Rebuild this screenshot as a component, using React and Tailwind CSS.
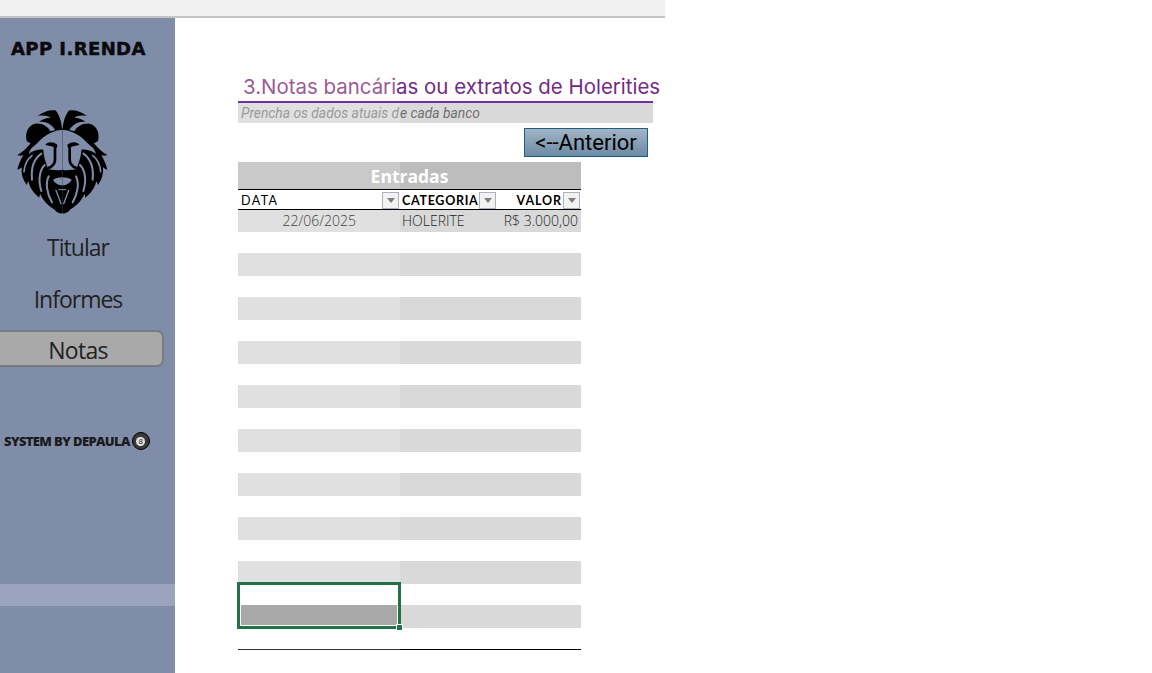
import React from 'react';

const bandRows = [0, 1, 2, 3, 4, 5, 6, 7, 8];

function LionHalf() {
    return (
        <g>
            {/* crown tuft */}
            <path fill="#000" d="M157 80C155 52 149 30 136 16C118 14 100 20 83 33C100 30 112 32 122 38C108 38 96 43 87 51C108 47 128 58 140 82Z" />
            {/* ear */}
            <path fill="#000" d="M50 108C44 84 54 60 76 56C96 54 114 64 124 84L110 100L70 120Z" />
            {/* mane */}
            <path fill="#000" d="M157 70L115 80C90 90 66 108 54 124C44 136 34 144 22 150C28 153 34 153 40 151C32 164 26 178 22 194C27 193 31 190 35 187C33 206 38 224 50 240C52 235 53 232 55 229C60 250 72 266 88 278C88 274 89 270 91 268C100 288 116 304 134 314C140 323 150 326 157 325Z" />
            {/* face */}
            <path fill="#808da9" d="M157 74C135 76 116 84 100 97C88 108 76 120 64 130C60 136 58 140 56 146C72 136 88 132 100 134C100 150 106 172 116 194L157 208Z" />
            {/* brow */}
            <path fill="#000" d="M106 120C112 109 130 109 142 119L140 130C128 124 118 122 106 120Z" />
            {/* bridge line */}
            <path fill="none" stroke="#000" strokeWidth="8" d="M135 124L135 164C135 176 128 184 114 190" />
            {/* mouth */}
            <path fill="#000" d="M112 192C126 194 142 198 157 194L157 210C140 208 122 204 112 192Z" />
            {/* muzzle */}
            <path fill="#808da9" d="M129 224C138 219 148 217 157 217L157 241C145 241 134 234 129 224Z" />
            {/* chin */}
            <path fill="none" stroke="#808da9" strokeWidth="4" strokeLinecap="round" d="M138 256L153 296" />
            <path fill="none" stroke="#808da9" strokeWidth="3" strokeLinecap="round" d="M146 254L157 254" />
            {/* mane stripes */}
            <path fill="none" stroke="#808da9" strokeWidth="5" strokeLinecap="round" d="M66 152C52 162 44 178 42 200" />
            <path fill="none" stroke="#808da9" strokeWidth="6" strokeLinecap="round" d="M94 146C74 160 62 184 66 224" />
            <path fill="none" stroke="#808da9" strokeWidth="6" strokeLinecap="round" d="M104 180C88 196 84 226 94 258" />
            <path fill="none" stroke="#808da9" strokeWidth="6" strokeLinecap="round" d="M116 214C106 234 110 264 126 292" />
        </g>
    );
}

function LionLogo() {
    return (
        <svg viewBox="0 0 315 345" className="w-[105px] h-[115px] block">
            <LionHalf />
            <g transform="matrix(-1 0 0 1 314 0)">
                <LionHalf />
            </g>
        </svg>
    );
}

function FilterButton() {
    return (
        <span className="w-[17px] h-[17px] shrink-0 border border-[#adb2c0] bg-[#f2f2f2] flex items-center justify-center">
            <svg viewBox="0 0 8 5" className="w-[8px] h-[5px]">
                <path d="M0 0H8L4 5Z" fill="#7f7f7f" />
            </svg>
        </span>
    );
}

function Sidebar() {
    return (
        <aside className="w-[175px] h-[655px] shrink-0 bg-[#808da9] flex flex-col">
            <h1 className="pl-[11px] pt-[21px] text-[18px] leading-[20px] tracking-[0.42px] font-bold text-[#0a0a0a] whitespace-nowrap [-webkit-text-stroke:0.5px_#0a0a0a] font-['DejaVu_Sans',sans-serif]">APP I.RENDA</h1>
            <div className="pl-[10px] mt-[46px]">
                <LionLogo />
            </div>
            <nav className="mt-[9px] flex flex-col items-start font-['Open_Sans',sans-serif] text-[23px] tracking-[-1px] text-[#222]">
                <span className="w-[156px] h-[36px] leading-[36px] text-center">Titular</span>
                <span className="w-[156px] h-[36px] mt-[16px] leading-[36px] text-center">Informes</span>
                <span className="w-[164px] h-[37px] mt-[13px] pr-[6px] leading-[37px] tracking-[-0.7px] text-center bg-[#a9a9a9] border-2 border-l-0 border-[#777b84] rounded-r-[7px]">Notas</span>
            </nav>
            <div className="mt-[64px] pl-[4px] flex items-center gap-[2px]">
                <span className="text-[13px] leading-[20px] font-extrabold tracking-[-0.62px] text-[#1b1b1b] font-['Open_Sans',sans-serif]">SYSTEM BY DEPAULA</span>
                <span className="w-[18px] h-[18px] rounded-full bg-[#3a3a3a] border border-black flex items-center justify-center">
                    <span className="w-[9px] h-[9px] rounded-full bg-[#e4e4e4] text-[8px] leading-[9px] text-center text-[#222] font-['Liberation_Sans',sans-serif]">8</span>
                </span>
            </div>
            <div className="mt-[133px] h-[22px] bg-[#9aa4bd]"></div>
        </aside>
    );
}

function EntriesTable() {
    return (
        <div className="relative w-[343px] mt-[5px]">
            <div className="grid grid-cols-[162px_181px] h-[27px]">
                <div className="bg-[#c9c9c9]"></div>
                <div className="bg-[#bdbdbd]"></div>
            </div>
            <div className="absolute left-0 top-[1px] w-[343px] h-[27px] text-center leading-[27px] text-[17.5px] font-bold text-white font-['Open_Sans',sans-serif]">Entradas</div>

            <div className="grid grid-cols-[162px_181px] h-[21px] border-y border-black text-[12.5px] text-black font-['Lato',sans-serif]">
                <div className="flex items-center justify-between pl-[3px] pr-[1px]">
                    <span className="tracking-[1.4px] pt-[2px]">DATA</span>
                    <FilterButton />
                </div>
                <div className="flex items-center font-bold">
                    <span className="pl-[2px] tracking-[0.7px] pt-[2px]">CATEGORIA</span>
                    <span className="ml-[1px]"><FilterButton /></span>
                    <span className="ml-auto tracking-[0.9px] pt-[2px]">VALOR</span>
                    <span className="ml-[1px] mr-[1px]"><FilterButton /></span>
                </div>
            </div>

            <div className="grid grid-cols-[162px_181px] h-[22px] text-[14px] leading-[22px] font-light text-[#222] font-['Open_Sans',sans-serif]">
                <div className="bg-[#e0e0e0] text-right pr-[44px] text-[#444]">22/06/2025</div>
                <div className="bg-[#d9d9d9] flex justify-between pl-[2px] pr-[3px]">
                    <span>HOLERITE</span>
                    <span>R$ 3.000,00</span>
                </div>
            </div>

            {bandRows.map((row) => (
                <div key={row} className="grid grid-cols-[162px_181px] h-[23px] mt-[21px]">
                    <div className="bg-[#e0e0e0]"></div>
                    <div className="bg-[#d9d9d9]"></div>
                </div>
            ))}

            <div className="grid grid-cols-[162px_181px] mt-[21px]">
                <div className="border-t border-[#333]"></div>
                <div className="border-t border-black"></div>
            </div>

            {/* selected merged cell */}
            <div className="absolute left-[-1px] top-[420px] w-[164px] h-[47px] border-[3px] border-[#217346] bg-white p-px flex items-end">
                <div className="w-full h-[20px] bg-[#a8a8a8]"></div>
                <span className="absolute right-[-4px] bottom-[-4px] w-[5px] h-[5px] bg-[#217346] outline outline-1 outline-white"></span>
            </div>
        </div>
    );
}

function App() {
    return (
        <div className="w-[1152px] h-[673px] bg-white overflow-hidden">
            <div className="w-[665px] h-full flex flex-col">
                <div className="h-[18px] shrink-0 bg-[#f0f0f0] border-b-2 border-[#c4c4c4]"></div>
                <div className="flex flex-1 min-h-0">
                    <Sidebar />
                    <main className="flex-1 pl-[63px] pt-[55px]">
                        <h2 className="pl-[5px] h-[28px] whitespace-nowrap text-[20.45px] leading-[28px] text-[#732a85] font-['Inter',sans-serif]">
                            <span className="text-[#9c5a96]">3.Notas bancári</span>as ou extratos de Holerities
                        </h2>
                        <div className="w-[415px] border-t-2 border-[#7030a0] grid grid-cols-[162px_253px] h-[22px] text-[13.8px] leading-[20px] italic font-['Roboto',sans-serif]">
                            <div className="bg-[#e0e0e0] pl-[3px] text-[#9a9a9a] whitespace-nowrap">Prencha os dados atuais d</div>
                            <div className="bg-[#d9d9d9] text-[#6f6f6f] whitespace-nowrap">e cada banco</div>
                        </div>
                        <div className="w-[410px] flex justify-end mt-[5px]">
                            <button className="w-[124px] h-[29px] border border-[#1f5f80] bg-gradient-to-b from-[#a3b5c6] to-[#6d8aa5] text-[22px] leading-[27px] text-black font-['Roboto',sans-serif]">&lt;--Anterior</button>
                        </div>
                        <EntriesTable />
                    </main>
                </div>
            </div>
        </div>
    );
}

export default App;
